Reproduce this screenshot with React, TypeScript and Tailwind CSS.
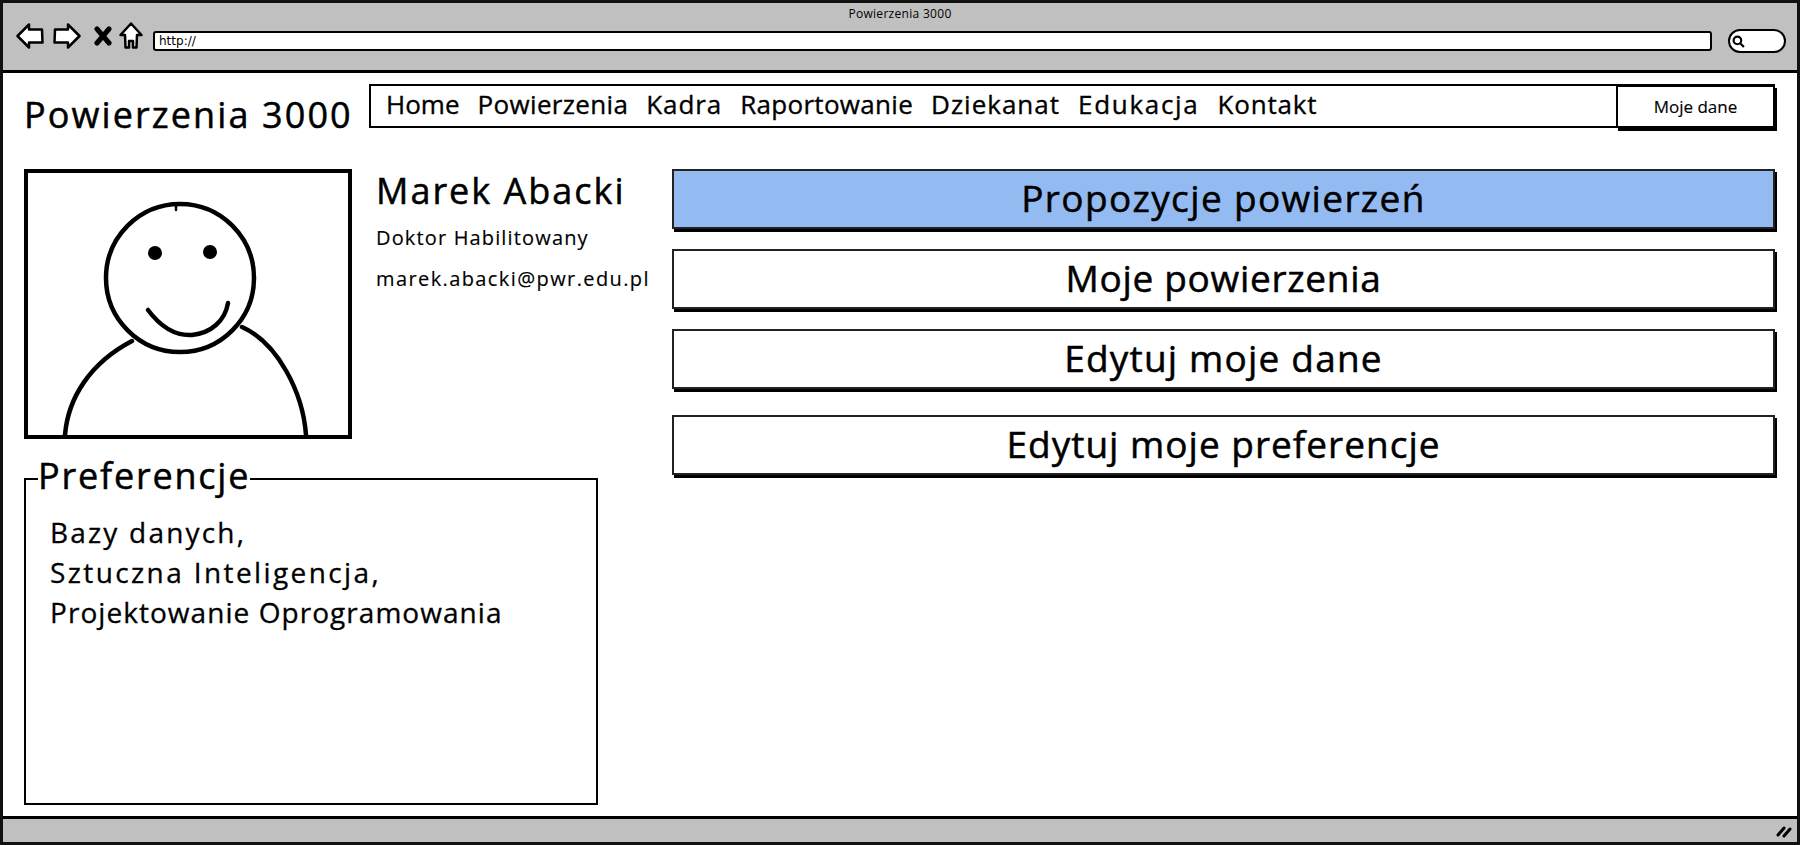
import React from 'react';

const navItems = [
  { label: "Home", spacing: "tracking-[0px]" },
  { label: "Powierzenia", spacing: "tracking-[0.35px]" },
  { label: "Kadra", spacing: "tracking-[0.9px]" },
  { label: "Raportowanie", spacing: "tracking-[0.3px]" },
  { label: "Dziekanat", spacing: "tracking-[1px]" },
  { label: "Edukacja", spacing: "tracking-[1.7px]" },
  { label: "Kontakt", spacing: "tracking-[0.8px]" },
];

const actions = [
  { label: "Propozycje powierzeń", active: true, margin: "", spacing: "tracking-[1.35px]" },
  { label: "Moje powierzenia", active: false, margin: "mt-[20px]", spacing: "tracking-[0.7px]" },
  { label: "Edytuj moje dane", active: false, margin: "mt-[20px]", spacing: "tracking-[1.2px]" },
  { label: "Edytuj moje preferencje", active: false, margin: "mt-[26px]", spacing: "tracking-[1px]" },
];

function BrowserIcons() {
  return (
    <div className="flex items-center gap-[8px] text-black -mt-[10px]">
      <svg width="28" height="26" viewBox="0 0 28 26" fill="white" stroke="black" strokeWidth="2.5" strokeLinejoin="round">
        <path d="M1.5 13 L13 1.5 L13 6.5 L26 6.5 L26.5 19.5 L13 19.5 L13 24.5 Z" />
      </svg>
      <svg width="28" height="26" viewBox="0 0 28 26" fill="white" stroke="black" strokeWidth="2.5" strokeLinejoin="round" className="ml-[1px]">
        <path d="M26.5 13 L15 1.5 L15 6.5 L2 6.5 L1.5 19.5 L15 19.5 L15 24.5 Z" />
      </svg>
      <svg width="18" height="20" viewBox="0 0 18 20" fill="none" stroke="black" strokeWidth="5" strokeLinecap="round" className="ml-[5px]">
        <path d="M3 3 L15 17 M15 3 L3 17" />
      </svg>
      <svg width="24" height="28" viewBox="0 0 24 28" fill="white" stroke="black" strokeWidth="2.5" strokeLinejoin="round" className="-ml-[1px]">
        <path d="M12 1.5 L22.5 13 L18 13 L17.5 25.5 L14 25.5 L14 19 L10 19 L10 25.5 L6.5 25.5 L6 13 L1.5 13 Z" />
      </svg>
    </div>
  );
}

export default function App() {
  return (
    <div className="w-[1800px] h-[845px] flex flex-col bg-white text-black border-[3px] border-[#111] overflow-hidden font-['Open_Sans',sans-serif] font-medium">
      {/* browser chrome */}
      <div className="h-[70px] shrink-0 bg-[#c0c0c0] border-b-[3px] border-black">
        <div className="text-center text-[12px] leading-[16px] pt-[3px] tracking-[0.3px]">Powierzenia 3000</div>
        <div className="flex items-center pl-[13px] pr-[11px] mt-[7px]">
          <BrowserIcons />
          <div className="ml-[10px] flex-1 h-[20px] bg-white border-[2px] border-black rounded-[3px] flex items-center pl-[4px] text-[12px] font-normal font-['DejaVu_Sans',sans-serif]">http://</div>
          <div className="ml-[16px] w-[58px] h-[24px] bg-white border-[2px] border-black rounded-full flex items-center pl-[2px]">
            <svg width="13" height="13" viewBox="0 0 12 12" fill="none" stroke="black" strokeWidth="2">
              <circle cx="5" cy="5" r="3.5" />
              <path d="M8 8 L11 11" />
            </svg>
          </div>
        </div>
      </div>

      <div className="flex-1 min-h-0 pl-[21px] pr-[22px] pt-[11px] [-webkit-text-stroke:0.5px_#000]">
        {/* top bar */}
        <div className="flex items-center h-[44px]">
          <div className="w-[345px] text-[36px] leading-[44px] tracking-[2.1px] whitespace-nowrap mt-[17px]">Powierzenia 3000</div>
          <div className="flex-1 h-[44px] border-[2px] border-black flex items-center pl-[15px] text-[26px] gap-[18px] relative [-webkit-text-stroke:0.35px_#000]">
            {navItems.map((item) => (
              <span key={item.label} className={`mt-[-3px] ${item.spacing}`}>{item.label}</span>
            ))}
            <div className="absolute right-[-2px] top-[-1px] w-[159px] h-[43px] bg-white border-[2px] border-black shadow-[2px_3px_0_#000] flex items-center justify-center text-[17px] [-webkit-text-stroke:0.15px_#000]">Moje dane</div>
          </div>
        </div>

        <div className="flex mt-[41px]">
          {/* left */}
          <div className="w-[648px] shrink-0">
            <div className="flex">
              <div className="w-[328px] h-[270px] border-[4px] border-black shrink-0 overflow-hidden">
                <svg width="320" height="262" viewBox="0 0 320 262" fill="none" stroke="black" strokeWidth="4.5" strokeLinecap="round">
                  <circle cx="152" cy="105" r="74" />
                  <path d="M148 31 L148 37" strokeWidth="2.5" />
                  <circle cx="127" cy="80" r="7" fill="black" stroke="none" />
                  <circle cx="182" cy="79" r="7" fill="black" stroke="none" />
                  <path d="M120 137 C 132 153, 147 163, 164 162 C 183 160, 197 148, 200 130" />
                  <path d="M104 168 C 62 190, 40 225, 37 262" />
                  <path d="M214 154 C 250 170, 275 220, 278 262" />
                </svg>
              </div>
              <div className="ml-[24px] whitespace-nowrap">
                <div className="text-[36px] leading-[44px] tracking-[2px]">Marek Abacki</div>
                <div className="text-[20px] leading-[26px] tracking-[1.15px] mt-[12px] [-webkit-text-stroke:0.15px_#000]">Doktor Habilitowany</div>
                <div className="text-[20px] leading-[26px] tracking-[1.4px] mt-[15px] [-webkit-text-stroke:0.15px_#000]">marek.abacki@pwr.edu.pl</div>
              </div>
            </div>

            <fieldset className="w-[574px] h-[350px] border-[2px] border-black mt-[16px] pl-[24px] pt-[9px] box-border">
              <legend className="-ml-[12px] px-0 pb-[6px] text-[36px] leading-[42px] tracking-[1.8px]">Preferencje</legend>
              <div className="text-[28px] leading-[40px] [-webkit-text-stroke:0.3px_#000]">
                <div className="tracking-[2.2px]">Bazy danych,</div>
                <div className="tracking-[2.4px]">Sztuczna Inteligencja,</div>
                <div className="tracking-[1.05px]">Projektowanie Oprogramowania</div>
              </div>
            </fieldset>
          </div>

          {/* right buttons */}
          <div className="flex-1 min-w-0">
            {actions.map((a) => (
              <div
                key={a.label}
                className={`h-[60px] pb-[2px] border-[2px] border-[#222] shadow-[2px_3px_0_#000] flex items-center justify-center text-[37px] ${a.spacing} ${a.active ? "bg-[#94bbf1]" : "bg-white"} ${a.margin}`}
              >
                {a.label}
              </div>
            ))}
          </div>
        </div>
      </div>

      {/* status bar */}
      <div className="h-[26px] shrink-0 bg-[#c0c0c0] border-t-[3px] border-black flex items-center justify-end pr-[5px]">
        <svg width="16" height="14" viewBox="0 0 16 14" stroke="black" strokeWidth="3" strokeLinecap="round">
          <path d="M2 11 L8 4 M8 12 L14 5" />
        </svg>
      </div>
    </div>
  );
}
